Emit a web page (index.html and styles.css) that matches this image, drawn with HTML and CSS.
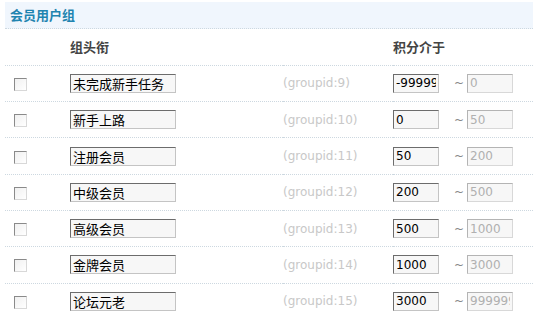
FILE: index.html
```html
<!DOCTYPE html>
<html lang="zh-CN">
<head>
  <meta charset="UTF-8" />
  <title>会员用户组</title>
  <link rel="stylesheet" href="styles.css">
</head>
<body>

<div class="panel">
  <h3 class="panel-title">会员用户组</h3>

  <table class="groups">
    <thead>
      <tr>
        <th class="col-check"></th>
        <th class="col-name">组头衔</th>
        <th class="col-id"></th>
        <th class="col-credits">积分介于</th>
      </tr>
    </thead>
    <tbody>
      <tr>
        <td class="col-check"><input type="checkbox" class="chk"></td>
        <td class="col-name"><input type="text" class="txt name" value="未完成新手任务"></td>
        <td class="col-id">(groupid:9)</td>
        <td class="col-credits"><input type="text" class="txt num" value="-999999999"><span class="tilde">~</span><input type="text" class="txt num" value="0" disabled></td>
      </tr>
      <tr>
        <td class="col-check"><input type="checkbox" class="chk"></td>
        <td class="col-name"><input type="text" class="txt name" value="新手上路"></td>
        <td class="col-id">(groupid:10)</td>
        <td class="col-credits"><input type="text" class="txt num" value="0"><span class="tilde">~</span><input type="text" class="txt num" value="50" disabled></td>
      </tr>
      <tr>
        <td class="col-check"><input type="checkbox" class="chk"></td>
        <td class="col-name"><input type="text" class="txt name" value="注册会员"></td>
        <td class="col-id">(groupid:11)</td>
        <td class="col-credits"><input type="text" class="txt num" value="50"><span class="tilde">~</span><input type="text" class="txt num" value="200" disabled></td>
      </tr>
      <tr>
        <td class="col-check"><input type="checkbox" class="chk"></td>
        <td class="col-name"><input type="text" class="txt name" value="中级会员"></td>
        <td class="col-id">(groupid:12)</td>
        <td class="col-credits"><input type="text" class="txt num" value="200"><span class="tilde">~</span><input type="text" class="txt num" value="500" disabled></td>
      </tr>
      <tr>
        <td class="col-check"><input type="checkbox" class="chk"></td>
        <td class="col-name"><input type="text" class="txt name" value="高级会员"></td>
        <td class="col-id">(groupid:13)</td>
        <td class="col-credits"><input type="text" class="txt num" value="500"><span class="tilde">~</span><input type="text" class="txt num" value="1000" disabled></td>
      </tr>
      <tr>
        <td class="col-check"><input type="checkbox" class="chk"></td>
        <td class="col-name"><input type="text" class="txt name" value="金牌会员"></td>
        <td class="col-id">(groupid:14)</td>
        <td class="col-credits"><input type="text" class="txt num" value="1000"><span class="tilde">~</span><input type="text" class="txt num" value="3000" disabled></td>
      </tr>
      <tr>
        <td class="col-check"><input type="checkbox" class="chk"></td>
        <td class="col-name"><input type="text" class="txt name" value="论坛元老"></td>
        <td class="col-id">(groupid:15)</td>
        <td class="col-credits"><input type="text" class="txt num" value="3000"><span class="tilde">~</span><input type="text" class="txt num" value="999999999" disabled></td>
      </tr>
    </tbody>
  </table>
</div>

</body>
</html>
```

FILE: styles.css
```css
:root {
  --title: #1f84b0;
  --head-text: #444;
  --line: #cdd8e0;
  --bar-bg: #f0f6fd;
  --muted: #c8c8c8;
}

* {
  margin: 0;
  padding: 0;
  box-sizing: border-box;
}

body {
  background: #fff;
  font-family: "DejaVu Sans", "Noto Sans CJK SC", sans-serif;
  font-size: 12px;
  color: #000;
  overflow: hidden;
}

.panel {
  padding: 2px 0 0 5px;
}

.panel-title {
  height: 27px;
  padding-left: 5px;
  line-height: 25px;
  background: var(--bar-bg);
  border-bottom: 1px dotted var(--line);
  font-family: "Noto Sans CJK SC", sans-serif;
  font-size: 13px;
  font-weight: bold;
  color: var(--title);
}

.groups {
  width: 100%;
  border-collapse: collapse;
}

.groups th,
.groups td {
  height: 36.3px;
  padding: 0;
  border-bottom: 1px dotted var(--line);
  text-align: left;
  vertical-align: middle;
}

.groups th {
  font-family: "Noto Sans CJK SC", sans-serif;
  font-size: 13px;
  font-weight: bold;
  color: var(--head-text);
}

.col-check {
  width: 65px;
  padding-left: 9px !important;
}

.col-name {
  width: 213px;
}

.col-id {
  width: 110px;
  color: var(--muted);
}

.chk {
  appearance: none;
  display: block;
  width: 13px;
  height: 13px;
  margin-top: 2px;
  border: 1px solid;
  border-color: #8a8a8a #d8d8d8 #d8d8d8 #8a8a8a;
  background: linear-gradient(135deg, #f0f0f0, #fff);
}

.txt {
  height: 19px;
  padding: 0 2px;
  border: 1px solid;
  border-color: #6c6c6c #c4c4c4 #c4c4c4 #6c6c6c;
  background: #f7f7f7;
  color: #000;
  outline: none;
  vertical-align: middle;
}

.txt.name {
  width: 106px;
  font-family: "Noto Sans CJK SC", sans-serif;
  font-size: 13px;
}

.txt.num {
  width: 46px;
  font-family: "DejaVu Sans", sans-serif;
  font-size: 12px;
}

.txt.num:disabled {
  border-color: #b4b4b4 #d8d8d8 #d8d8d8 #b4b4b4;
  color: #b0b0b0;
}

.tilde {
  display: inline-block;
  width: 28px;
  padding-left: 15px;
  font-size: 12px;
  color: #888;
  vertical-align: middle;
}
```
